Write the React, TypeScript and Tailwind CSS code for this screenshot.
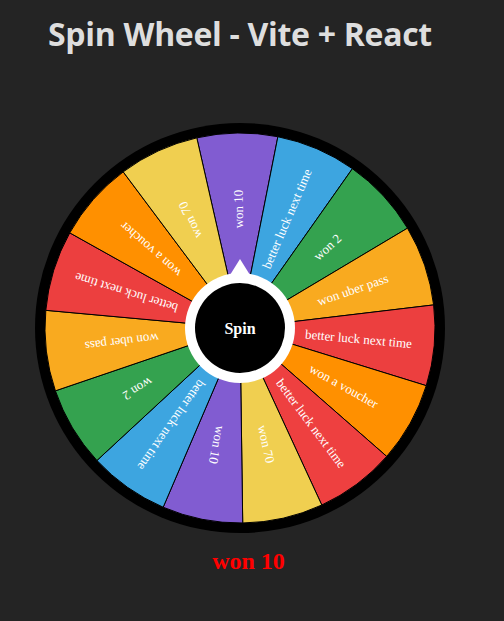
const SEGMENTS = [
  { label: "won 10", color: "#815CD1" },
  { label: "better luck next time", color: "#3DA5E0" },
  { label: "won 2", color: "#34A24F" },
  { label: "won uber pass", color: "#F9AA1F" },
  { label: "better luck next time", color: "#EC3F3F" },
  { label: "won a voucher", color: "#FF9000" },
  { label: "better luck next time", color: "#EE4040" },
  { label: "won 70", color: "#F0CF50" },
  { label: "won 10", color: "#815CD1" },
  { label: "better luck next time", color: "#3DA5E0" },
  { label: "won 2", color: "#34A24F" },
  { label: "won uber pass", color: "#F9AA1F" },
  { label: "better luck next time", color: "#EC3F3F" },
  { label: "won a voucher", color: "#FF9000" },
  { label: "won 70", color: "#F0CF50" },
];

const C = 205;
const R = 195;
const START = -12.8;
const STEP = 360 / SEGMENTS.length;

// angle in degrees, clockwise from 12 o'clock
function pt(deg: number, r: number) {
  const a = (deg * Math.PI) / 180;
  return [C + r * Math.sin(a), C - r * Math.cos(a)];
}

function Wheel() {
  return (
    <svg width={410} height={410} viewBox="0 0 410 410" className="block">
      <circle cx={C} cy={C} r={205} fill="#000" />
      {SEGMENTS.map((s, i) => {
        const a0 = START + i * STEP;
        const a1 = a0 + STEP;
        const [x0, y0] = pt(a0, R);
        const [x1, y1] = pt(a1, R);
        return (
          <path
            key={i}
            d={`M${C} ${C} L${x0} ${y0} A${R} ${R} 0 0 1 ${x1} ${y1} Z`}
            fill={s.color}
            stroke="#000"
            strokeWidth={1}
          />
        );
      })}
      {SEGMENTS.map((s, i) => {
        const mid = START + i * STEP + STEP / 2;
        return (
          <text
            key={i}
            x={C + 119}
            y={C}
            transform={`rotate(${mid - 90} ${C} ${C})`}
            textAnchor="middle"
            dominantBaseline="central"
            fill="#fff"
            fontSize={13}
            fontFamily="'Liberation Serif', serif"
          >
            {s.label}
          </text>
        );
      })}
      {/* needle + button */}
      <polygon points="190,160 205,136 220,160" fill="#fff" />
      <circle cx={C} cy={C} r={55} fill="#fff" />
      <circle cx={C} cy={C} r={45} fill="#000" />
      <text
        x={C}
        y={C}
        textAnchor="middle"
        dominantBaseline="central"
        fill="#fff"
        fontSize={16}
        fontWeight="bold"
        fontFamily="'Liberation Serif', serif"
      >
        Spin
      </text>
    </svg>
  );
}

export default function App() {
  return (
    <div className="min-h-screen w-full bg-[#242424]">
      <h1 className="m-0 w-[480px] pt-[14px] text-center font-['Open_Sans',sans-serif] text-[32px] leading-[40px] font-bold tracking-[-0.3px] text-[#dedede]">
        Spin Wheel - Vite + React
      </h1>
      <div className="mt-[69px] ml-[35px] h-[410px] w-[410px]">
        <Wheel />
      </div>
      <p className="mt-[14px] w-[497px] text-center font-['Liberation_Serif',serif] text-[24px] leading-[28px] font-bold text-[#ff0000]">
        won 10
      </p>
    </div>
  );
}
